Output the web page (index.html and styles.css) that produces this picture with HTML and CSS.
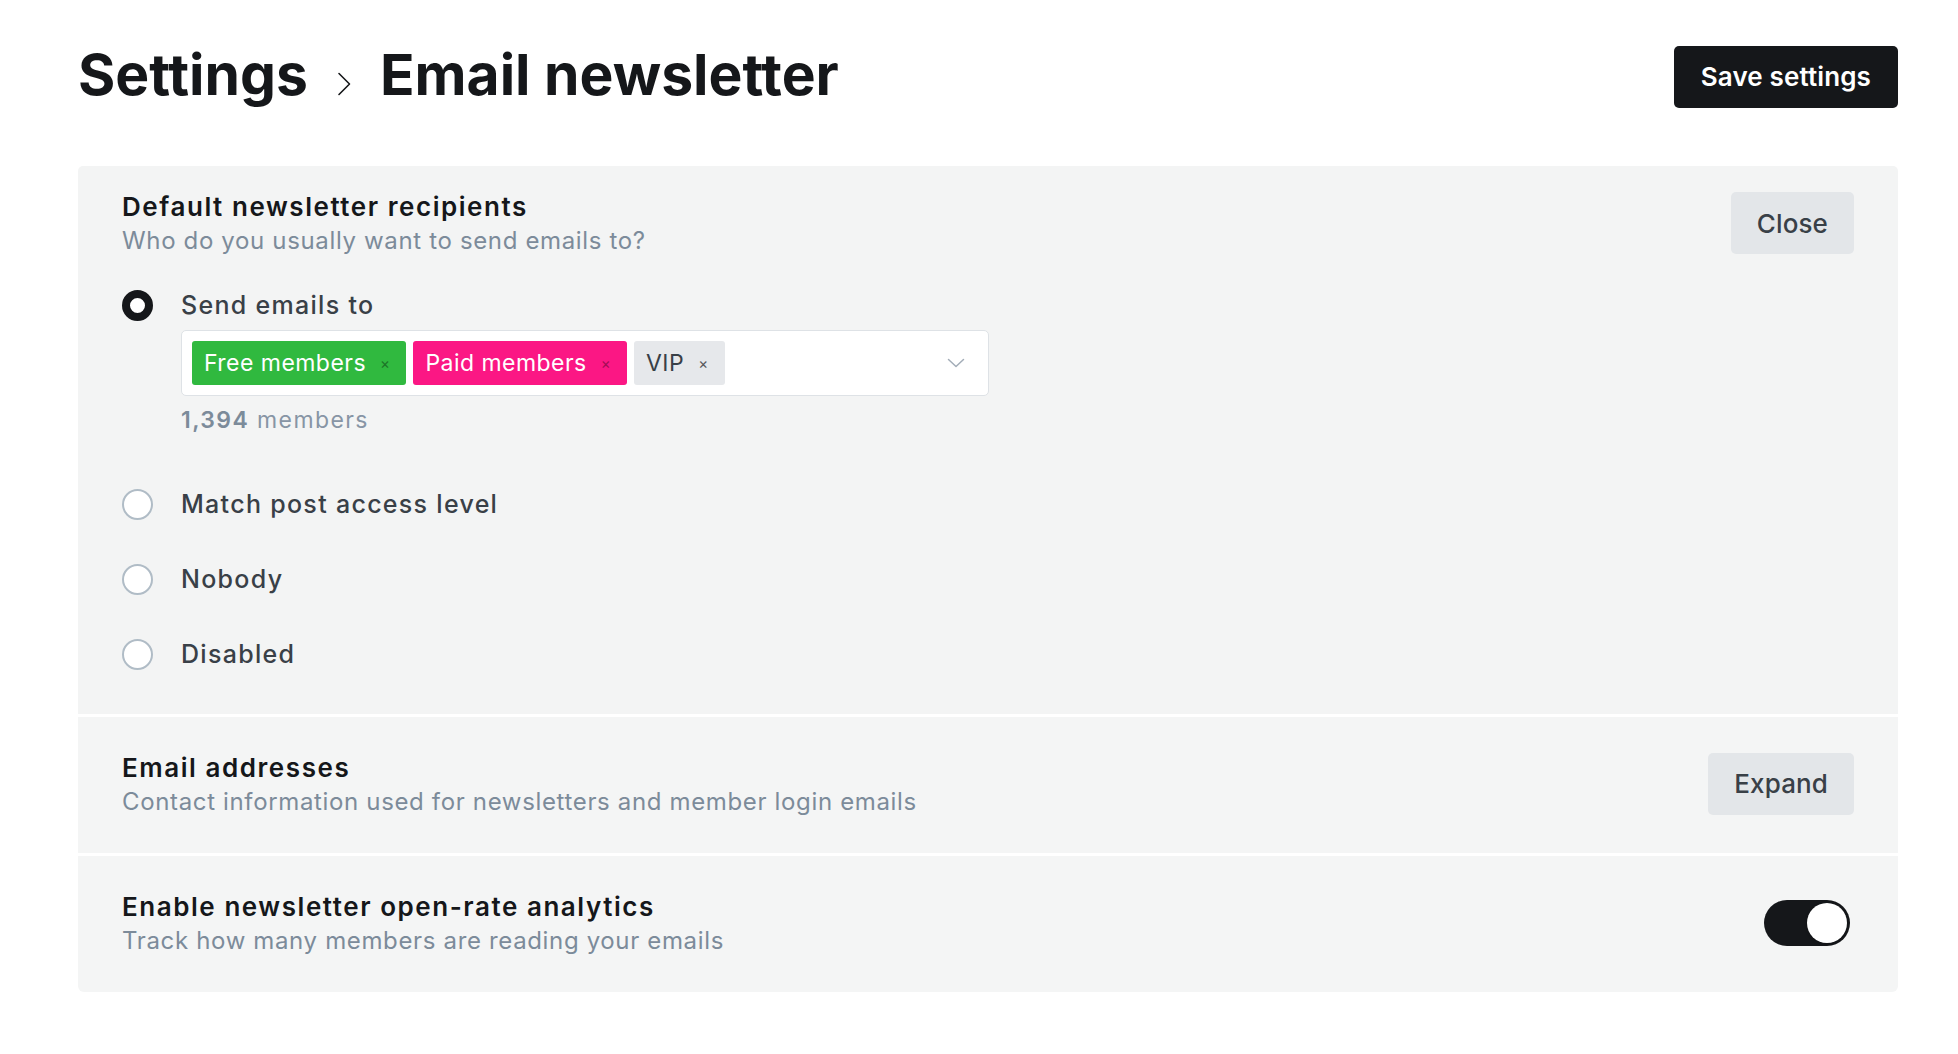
FILE: index.html
```html
<!DOCTYPE html>
<html lang="en">
<head>
<meta charset="utf-8">
<title>Settings › Email newsletter</title>
<link rel="stylesheet" href="styles.css">
</head>
<body>
<div class="page">
  <header class="header">
    <h1 class="title">
      <span>Settings</span>
      <svg class="crumb-sep" viewBox="0 0 14 24" width="14" height="24" aria-hidden="true"><polyline points="2,1.5 12.5,12 2,22.5" fill="none" stroke="#15171a" stroke-width="1.6" stroke-linecap="round" stroke-linejoin="round"/></svg>
      <span>Email newsletter</span>
    </h1>
    <button class="btn btn--dark">Save settings</button>
  </header>

  <div class="panels">
    <section class="panel panel--open">
      <div class="panel-head">
        <div class="panel-text">
          <div class="heading">Default newsletter recipients</div>
          <div class="sub">Who do you usually want to send emails to?</div>
        </div>
        <button class="btn">Close</button>
      </div>

      <div class="options">
        <div class="option-group">
          <div class="option">
            <span class="radio radio--checked"></span>
            <span class="option-label">Send emails to</span>
          </div>
          <div class="option-body">
            <div class="select">
              <div class="tags">
                <span class="tag tag--green">Free members <span class="tag-x">×</span></span>
                <span class="tag tag--pink">Paid members <span class="tag-x">×</span></span>
                <span class="tag tag--gray">VIP <span class="tag-x">×</span></span>
              </div>
              <svg class="select-arrow" viewBox="0 0 18 10" width="18" height="10" aria-hidden="true"><polyline points="1.5,1.5 9,8.5 16.5,1.5" fill="none" stroke="#a3adb8" stroke-width="1.5" stroke-linecap="round" stroke-linejoin="round"/></svg>
            </div>
            <div class="count"><b>1,394</b> members</div>
          </div>
        </div>
        <div class="option">
          <span class="radio"></span>
          <span class="option-label">Match post access level</span>
        </div>
        <div class="option">
          <span class="radio"></span>
          <span class="option-label">Nobody</span>
        </div>
        <div class="option">
          <span class="radio"></span>
          <span class="option-label">Disabled</span>
        </div>
      </div>
    </section>

    <section class="panel panel--collapsed">
      <div class="panel-head">
        <div class="panel-text">
          <div class="heading">Email addresses</div>
          <div class="sub">Contact information used for newsletters and member login emails</div>
        </div>
        <button class="btn">Expand</button>
      </div>
    </section>

    <section class="panel panel--collapsed panel--last">
      <div class="panel-head">
        <div class="panel-text">
          <div class="heading">Enable newsletter open-rate analytics</div>
          <div class="sub">Track how many members are reading your emails</div>
        </div>
        <span class="toggle"><span class="toggle-knob"></span></span>
      </div>
    </section>
  </div>
</div>
</body>
</html>
```

FILE: styles.css
```css
* { box-sizing: border-box; }

body {
  margin: 0;
  background: #ffffff;
  color: #15171a;
  font-family: Inter, "Noto Sans", "Liberation Sans", sans-serif;
}

.page {
  width: 1820px;
  margin-left: 78px;
}

.header {
  display: flex;
  align-items: center;
  justify-content: space-between;
  padding-top: 41px;
  margin-bottom: 57px;
}

.title {
  display: flex;
  align-items: center;
  margin: 0;
  font-size: 57px;
  line-height: 68px;
  font-weight: 700;
  letter-spacing: 0;
  color: #15171a;
}

.crumb-sep {
  margin: 18px 29px 0 29px;
  flex: none;
}

.btn {
  height: 62px;
  padding: 0 26px;
  border: 0;
  border-radius: 5px;
  background: #e3e6e9;
  color: #394047;
  font-family: inherit;
  font-size: 26px;
  font-weight: 500;
  letter-spacing: 0.005em;
  flex: none;
}

.btn--dark {
  margin-top: 3px;
  background: #15171a;
  color: #ffffff;
  font-weight: 600;
  padding: 0 27px;
}

.panels {
  display: flex;
  flex-direction: column;
  gap: 3px;
}

.panel {
  background: #f4f5f5;
  padding: 0 44px;
}

.panel--open {
  background: #f3f4f4;
  padding: 23px 44px 43px;
  border-radius: 5px 5px 0 0;
}

.panel--collapsed {
  height: 136px;
  display: flex;
  align-items: center;
  padding-bottom: 3px;
}

.panel--last {
  border-radius: 0 0 6px 6px;
}

.panel-head {
  width: 100%;
  display: flex;
  align-items: center;
  justify-content: space-between;
}

.heading {
  font-size: 26px;
  line-height: 35px;
  font-weight: 600;
  letter-spacing: 1.55px;
  color: #15171a;
}

.sub {
  margin-top: 1px;
  font-size: 24px;
  line-height: 32px;
  letter-spacing: 0.65px;
  color: #7c8b9a;
}

.options {
  margin-top: 31px;
  display: flex;
  flex-direction: column;
  gap: 41px;
}

.option-group {
  margin-bottom: 10px;
}

.option {
  display: flex;
  align-items: center;
  gap: 28px;
  height: 34px;
}

.radio {
  width: 31px;
  height: 31px;
  flex: none;
  border-radius: 50%;
  border: 2px solid #b0bcc6;
  background: #ffffff;
}

.radio--checked {
  border: 8px solid #15171a;
}

.option-label {
  font-size: 25px;
  font-weight: 500;
  color: #394047;
  letter-spacing: 1.3px;
}

.option-body {
  padding-left: 59px;
}

.select {
  margin-top: 8px;
  width: 808px;
  height: 66px;
  display: flex;
  align-items: center;
  justify-content: space-between;
  padding: 0 23px 0 10px;
  background: #ffffff;
  border: 1.5px solid #dee2e6;
  border-radius: 5px;
}

.tags {
  display: flex;
  gap: 7px;
}

.tag {
  height: 44px;
  display: flex;
  align-items: center;
  gap: 14px;
  padding: 0 16px 0 12px;
  border-radius: 3px;
  font-size: 23px;
  letter-spacing: 0.02em;
}

.tag-x {
  font-size: 15px;
  opacity: 0.55;
}

.tag--green { background: #30b93f; color: #ffffff; }
.tag--green .tag-x { color: #0d3d14; }
.tag--pink { background: #fb1784; color: #ffffff; }
.tag--pink .tag-x { color: #5a0630; }
.tag--gray { background: #e6e8eb; color: #394047; }
.tag--gray .tag-x { color: #15171a; opacity: 0.7; }

.select-arrow {
  flex: none;
}

.count {
  margin-top: 8px;
  font-size: 23px;
  line-height: 32px;
  color: #8795a5;
  letter-spacing: 1.4px;
}

.count b {
  font-weight: 600;
  color: #7c8b9a;
}

.toggle {
  position: relative;
  width: 86px;
  height: 46px;
  margin-right: 4px;
  border-radius: 23px;
  background: #15171a;
  flex: none;
}

.toggle-knob {
  position: absolute;
  top: 3px;
  right: 3px;
  width: 40px;
  height: 40px;
  border-radius: 50%;
  background: #ffffff;
  box-shadow: 0 1px 3px rgba(0, 0, 0, 0.25);
}
```
